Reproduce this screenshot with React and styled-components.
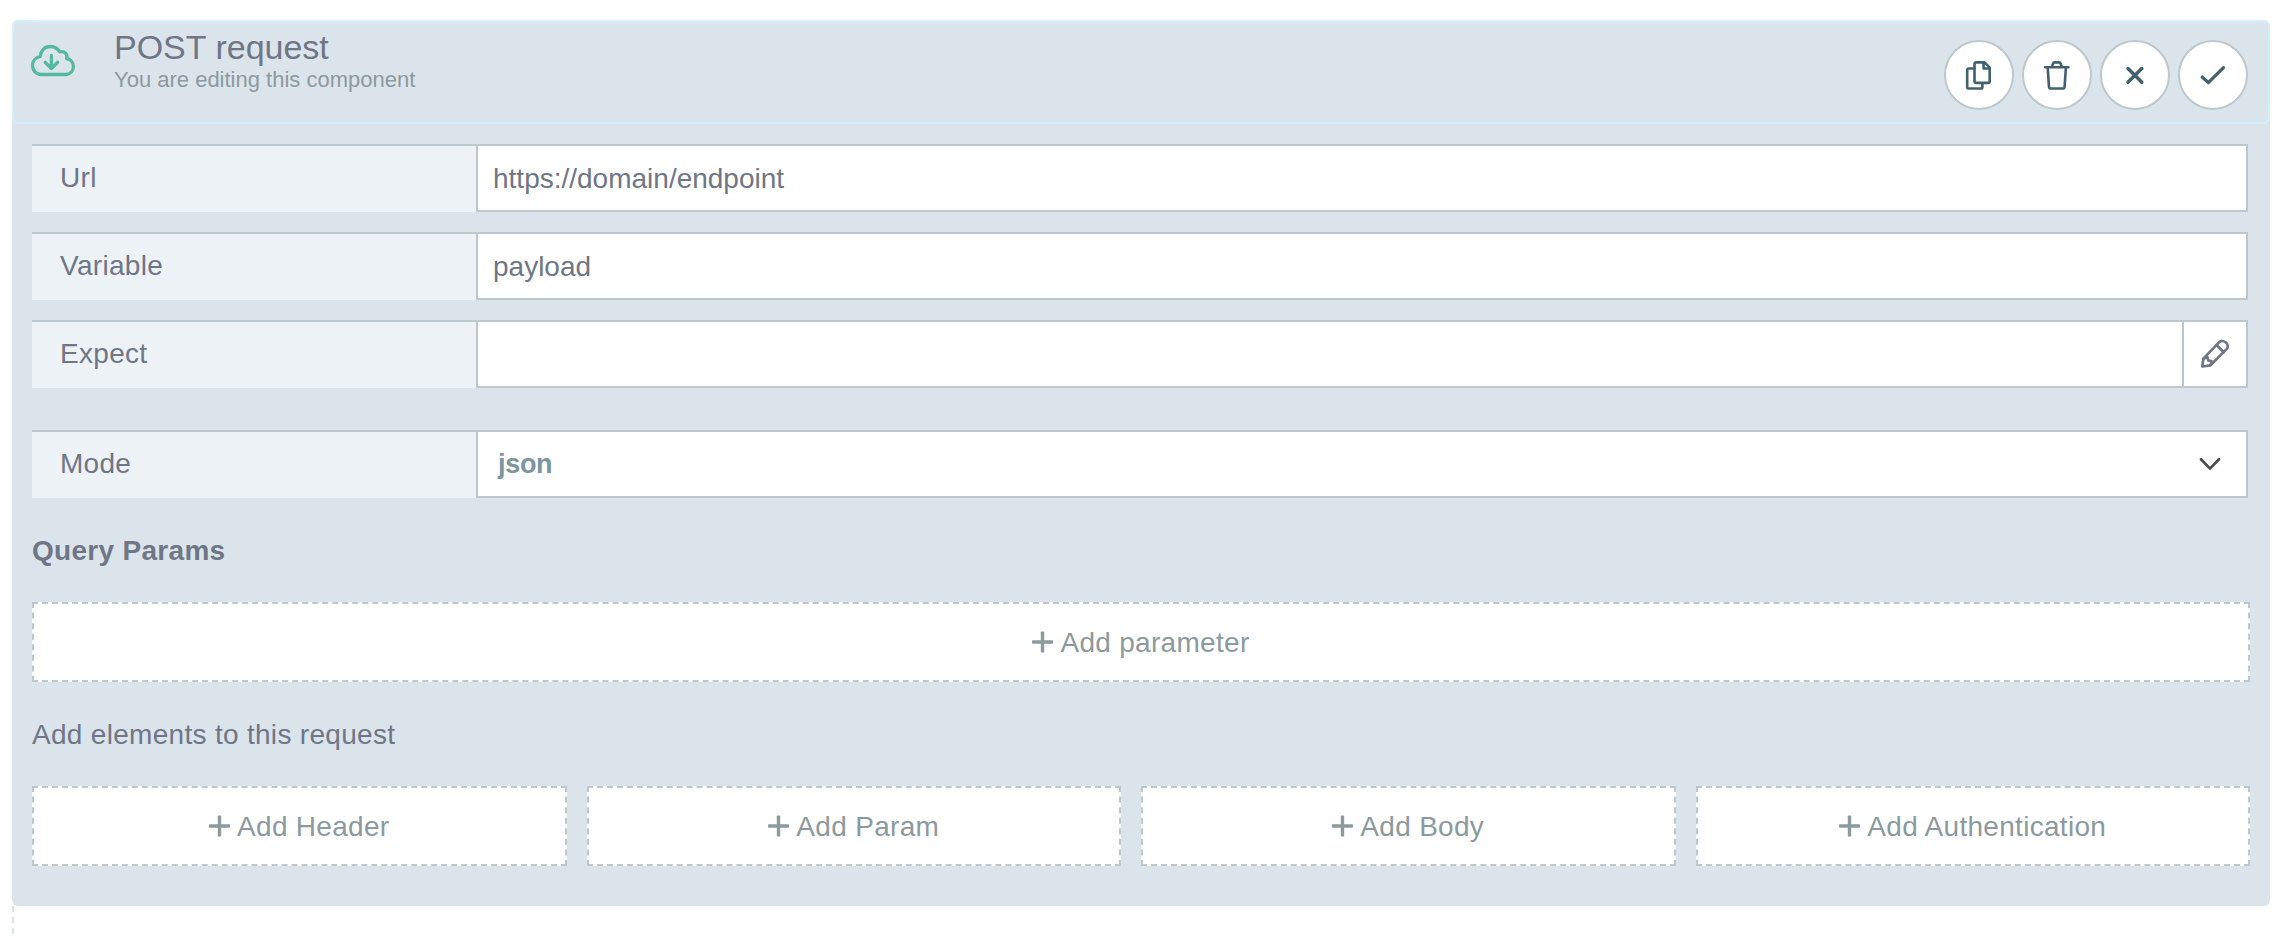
import React from "react";
import styled, { createGlobalStyle } from "styled-components";

const c = {
  panel: "#dce4eb",
  label: "#ecf2f6",
  line: "#bcc8ce",
  glow: "#d5effe",
  text: "#6f7686",
  muted: "#8c9a9d",
  icon: "#40616d",
  green: "#53ba9d",
};

const GlobalStyle = createGlobalStyle`
  * { box-sizing: border-box; }
  html, body { margin: 0; background: #fff; }
  body {
    font-family: "Liberation Sans", Helvetica, Arial, sans-serif;
    font-size: 28px;
    letter-spacing: 0.3px;
    color: ${c.text};
  }
  button, input { font: inherit; letter-spacing: inherit; color: inherit; }
  svg { display: block; flex: none; }
`;

const Page = styled.main`
  width: 2292px;
  height: 936px;
  padding: 20px 22px 0 12px;
  overflow: hidden;
`;

const Panel = styled.section`
  height: 886px;
  background: ${c.panel};
  border-radius: 6px;
`;

const Header = styled.header`
  display: flex;
  height: 104px;
  padding: 0 20px 0 16px;
  border: 2px solid ${c.glow};
  border-radius: 6px;
`;

const CloudSlot = styled.div`
  width: 84px;
  padding-top: 22px;
`;

const Heading = styled.div`
  flex: 1;
  padding-top: 6px;
`;

const Title = styled.h1`
  margin: 0;
  font-size: 34px;
  line-height: 38px;
  font-weight: 400;
  letter-spacing: 0;
`;

const Subtitle = styled.p`
  margin: 1px 0 0;
  font-size: 22px;
  line-height: 26px;
  letter-spacing: 0;
  color: ${c.muted};
`;

const Actions = styled.div`
  display: flex;
  gap: 8px;
  padding-top: 18px;
`;

const RoundButton = styled.button`
  display: flex;
  align-items: center;
  justify-content: center;
  width: 70px;
  height: 70px;
  padding: 0;
  border: 2px solid ${c.line};
  border-radius: 50%;
  background: #fff;
  color: ${c.icon};
`;

const Body = styled.div`
  padding: 20px 20px 0;
`;

const Field = styled.div`
  display: flex;
  height: 68px;
  margin: 0 2px ${(p) => p.$gap ?? 20}px 0;
`;

const Label = styled.label`
  width: 444px;
  padding-left: 28px;
  border-top: 2px solid ${c.line};
  background: ${c.label};
  line-height: 64px;
`;

const Control = styled.div`
  flex: 1;
  display: flex;
  align-items: stretch;
  border: 2px solid ${c.line};
  background: #fff;
`;

const Input = styled.input`
  flex: 1;
  min-width: 0;
  padding: 1px 0 0 15px;
  border: 0;
  outline: 0;
  background: transparent;
  letter-spacing: 0;
`;

const EditButton = styled.button`
  display: flex;
  align-items: center;
  justify-content: center;
  width: 64px;
  padding: 0;
  border: 0;
  border-left: 2px solid ${c.line};
  background: #fff;
`;

const Select = styled.div`
  flex: 1;
  display: flex;
  align-items: center;
  justify-content: space-between;
  padding: 0 24px 0 20px;
  font-size: 27px;
  font-weight: 700;
  letter-spacing: -0.3px;
  color: #7b969e;
`;

const SectionTitle = styled.h2`
  margin: 0;
  height: 104px;
  padding-top: 37px;
  font-size: 28px;
  line-height: 32px;
  font-weight: ${(p) => p.$weight};
`;

const AddRow = styled.div`
  display: flex;
`;

const AddCell = styled.div`
  width: ${(p) => p.$width};
  display: flex;
  padding-right: ${(p) => (p.$last ? 0 : 20)}px;
`;

const AddButton = styled.button`
  flex: 1;
  display: flex;
  align-items: center;
  justify-content: center;
  gap: 7px;
  height: 80px;
  padding: 0;
  border: 2px dashed ${c.line};
  background: #fff;
  color: ${c.muted};
`;

const AddText = styled.span`
  padding-top: 2px;
`;

const Rail = styled.div`
  width: 2px;
  height: 28px;
  border-left: 2px dashed ${c.panel};
`;

const stroke = {
  fill: "none",
  stroke: "currentColor",
  strokeLinecap: "round",
  strokeLinejoin: "round",
};

const CloudIcon = () => (
  <svg width="48" height="34" viewBox="30 44 48 34" {...stroke} stroke={c.green} strokeWidth="3.3">
    <path d="M41 74.5H66.6A8.1 8.1 0 0 0 66.6 58.5C68 54.5 64.5 50.6 59.8 51.9C57.8 48.6 54.7 46.5 50.5 46.5C44.7 46.5 40.5 50.7 40.3 56.5C35.8 57.5 32.5 61 32.5 65.500C32.5 70.5 36.3 74.5 41 74.5Z" />
    <path d="M51.4 55.5V68M45.2 62.3L51.4 68.5L57.7 62.3" />
  </svg>
);

const CopyIcon = () => (
  <svg width="34" height="34" viewBox="0 0 34 34" {...stroke} strokeWidth="2.6">
    <path d="M14.2 4.4H22.5L27.7 9.6V23.3Q27.7 24.9 26.1 24.9H14.2Q12.5 24.9 12.5 23.3V6Q12.5 4.4 14.2 4.4Z" />
    <path d="M21.6 4.6V10.5H27.4" />
    <path d="M12.3 10.5H6.9Q5.2 10.5 5.2 12.1V28.9Q5.2 30.5 6.9 30.5H18.7Q20.4 30.5 20.4 28.9V25.2" />
  </svg>
);

const TrashIcon = () => (
  <svg width="34" height="34" viewBox="0 0 34 34" {...stroke} strokeWidth="2.6">
    <path d="M5.200 9.300H28.400M11.800 9L12.900 5.800Q13.400 4.400 14.800 4.400H18.800Q20.200 4.400 20.700 5.800L21.800 9M7.700 9.500L9 28.800Q9.200 30.500 10.900 30.500H22.700Q24.400 30.500 24.600 28.800L25.900 9.500" />
  </svg>
);

const CloseIcon = () => (
  <svg width="34" height="34" viewBox="0 0 34 34" {...stroke} strokeWidth="3.5">
    <path d="M10 10.5L23.8 24.3M23.8 10.5L10 24.3" />
  </svg>
);

const CheckIcon = () => (
  <svg width="34" height="34" viewBox="0 0 34 34" {...stroke} strokeWidth="3.2">
    <path d="M6.2 19L12.3 24.7L27.5 9.7" />
  </svg>
);

const PencilIcon = () => (
  <svg width="30" height="32" viewBox="0 0 30 32" {...stroke} strokeWidth="2.7">
    <path d="M2.3 28.5L3.4 20.6L19.3 4.1C23.2 0.300 30.500 7 26.800 10.900L10.500 27.300Z" />
    <path d="M16.5 7L23.800 14.300M3.800 20.600L7.400 19.200L8.300 22.500L11.500 23L10.600 26.800" />
  </svg>
);

const ChevronIcon = () => (
  <svg width="24" height="16" viewBox="0 0 24 16" {...stroke} stroke="#4b4b4b" strokeWidth="2.7">
    <path d="M3 3.300L12 12.600L21 3.300" />
  </svg>
);

const PlusIcon = () => (
  <svg width="21" height="22" viewBox="0 0 21 22" fill="currentColor">
    <rect x="8.800" y="0.500" width="3.400" height="21" rx="0.800" />
    <rect x="0" y="9.300" width="21" height="3.400" rx="0.800" />
  </svg>
);

const TextField = ({ label, value, gap, children }) => (
  <Field $gap={gap}>
    <Label>{label}</Label>
    <Control>
      <Input defaultValue={value} aria-label={label} />
      {children}
    </Control>
  </Field>
);

const Add = ({ children, last, width = "25%" }) => (
  <AddCell $last={last} $width={width}>
    <AddButton>
      <PlusIcon />
      <AddText>{children}</AddText>
    </AddButton>
  </AddCell>
);

export default function App() {
  return (
    <>
      <GlobalStyle />
      <Page>
        <Panel>
          <Header>
            <CloudSlot>
              <CloudIcon />
            </CloudSlot>
            <Heading>
              <Title>POST request</Title>
              <Subtitle>You are editing this component</Subtitle>
            </Heading>
            <Actions>
              <RoundButton aria-label="Copy"><CopyIcon /></RoundButton>
              <RoundButton aria-label="Delete"><TrashIcon /></RoundButton>
              <RoundButton aria-label="Cancel"><CloseIcon /></RoundButton>
              <RoundButton aria-label="Save"><CheckIcon /></RoundButton>
            </Actions>
          </Header>
          <Body>
            <TextField label="Url" value="https://domain/endpoint" />
            <TextField label="Variable" value="payload" />
            <TextField label="Expect" value="" gap={42}>
              <EditButton aria-label="Edit"><PencilIcon /></EditButton>
            </TextField>
            <Field $gap={0}>
              <Label>Mode</Label>
              <Control>
                <Select>
                  json
                  <ChevronIcon />
                </Select>
              </Control>
            </Field>
            <SectionTitle $weight={700}>Query Params</SectionTitle>
            <AddRow>
              <Add last width="100%">Add parameter</Add>
            </AddRow>
            <SectionTitle $weight={400}>Add elements to this request</SectionTitle>
            <AddRow>
              <Add>Add Header</Add>
              <Add>Add Param</Add>
              <Add>Add Body</Add>
              <Add last>Add Authentication</Add>
            </AddRow>
          </Body>
        </Panel>
        <Rail />
      </Page>
    </>
  );
}
